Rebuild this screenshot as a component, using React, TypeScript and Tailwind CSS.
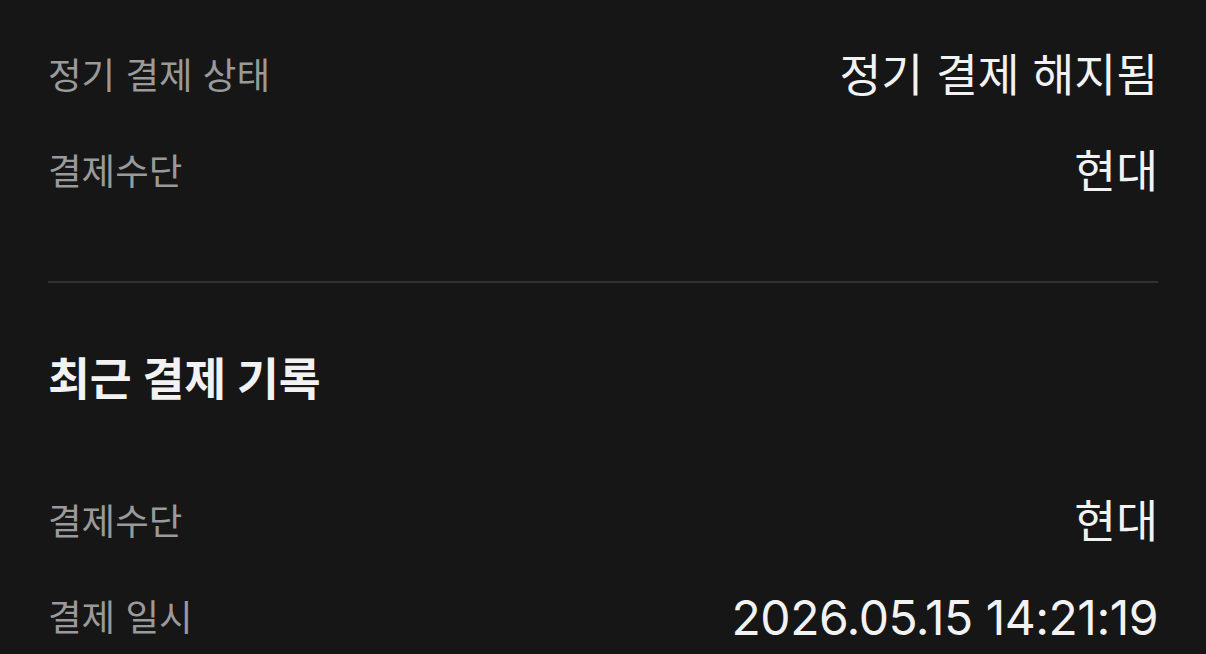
const font = { fontFamily: '"Inter", "Noto Sans CJK KR", sans-serif' }

interface Row {
  label: string
  value: string
  numeric?: boolean
}

const subscription: Row[] = [
  { label: '정기 결제 상태', value: '정기 결제 해지됨' },
  { label: '결제수단', value: '현대' },
]

const lastPayment: Row[] = [
  { label: '결제수단', value: '현대' },
  { label: '결제 일시', value: '2026.05.15 14:21:19', numeric: true },
]

function InfoRow({ label, value, numeric }: Row) {
  return (
    <div className="flex h-[96px] items-center justify-between">
      <span className="text-[36.5px] text-[#9a9a9a]">{label}</span>
      <span
        className={
          numeric
            ? 'text-[48px] tracking-[-0.5px] text-[#f2f2f2]'
            : 'text-[45.5px] text-[#f2f2f2]'
        }
      >
        {value}
      </span>
    </div>
  )
}

export default function App() {
  return (
    <div className="min-h-screen bg-[#161616] px-[48px] pt-[28px]" style={font}>
      {subscription.map((row) => (
        <InfoRow key={row.label} {...row} />
      ))}
      <div className="mt-[61px] h-[2px] bg-[#323232]" />
      <h2 className="mt-[67px] flex h-[60px] items-center text-[45.5px] font-bold text-[#f2f2f2]">
        최근 결제 기록
      </h2>
      <div className="mt-[64px]">
        {lastPayment.map((row) => (
          <InfoRow key={row.label} {...row} />
        ))}
      </div>
    </div>
  )
}
